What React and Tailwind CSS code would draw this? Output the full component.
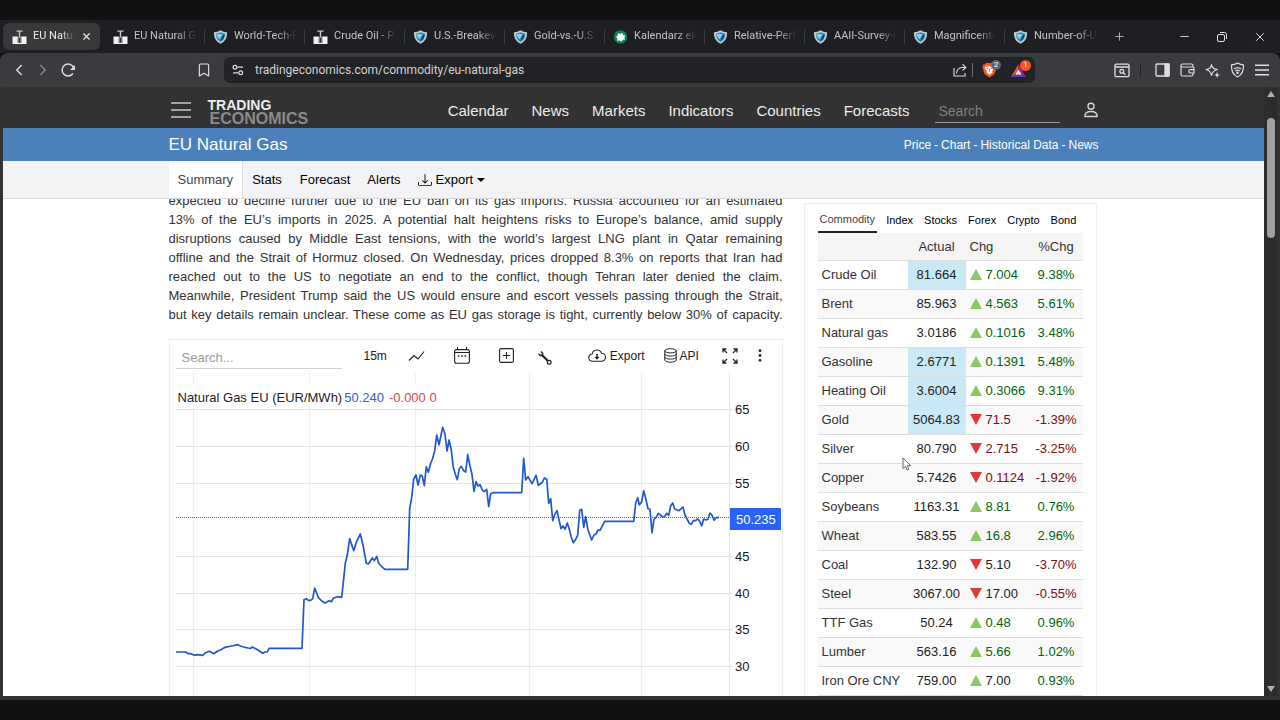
import React from 'react';
import { Bookmark, ChevronLeft, ChevronRight, Minus, Plus, X } from 'lucide-react';

// Titles are already shortened to what fits a tab; the end fades out.
const TABS = [
  { title: 'EU Natur', icon: 'te' },
  { title: 'EU Natural G', icon: 'te' },
  { title: 'World-Tech-E', icon: 'shield' },
  { title: 'Crude Oil - P', icon: 'te' },
  { title: 'U.S.-Breakev', icon: 'shield' },
  { title: 'Gold-vs.-U.S.', icon: 'shield' },
  { title: 'Kalendarz ek', icon: 'leaf' },
  { title: 'Relative-Perf', icon: 'shield' },
  { title: 'AAII-Survey-I', icon: 'shield' },
  { title: 'Magnificent-', icon: 'shield' },
  { title: 'Number-of-U', icon: 'shield' },
];

const NAV = ['Calendar', 'News', 'Markets', 'Indicators', 'Countries', 'Forecasts'];

const ARTICLE = [
  'expected to decline further due to the EU ban on its gas imports. Russia accounted for an estimated',
  '13% of the EU’s imports in 2025. A potential halt heightens risks to Europe’s balance, amid supply',
  'disruptions caused by Middle East tensions, with the world’s largest LNG plant in Qatar remaining',
  'offline and the Strait of Hormuz closed. On Wednesday, prices dropped 8.3% on reports that Iran had',
  'reached out to the US to negotiate an end to the conflict, though Tehran later denied the claim.',
  'Meanwhile, President Trump said the US would ensure and escort vessels passing through the Strait,',
  'but key details remain unclear. These come as EU gas storage is tight, currently below 30% of capacity.',
];

// hot: price cell was just updated; flat: change drawn in plain text colour
const QUOTES = [
  { name: 'Crude Oil', actual: '81.664', chg: '7.004', pct: '9.38%', up: true, hot: true },
  { name: 'Brent', actual: '85.963', chg: '4.563', pct: '5.61%', up: true },
  { name: 'Natural gas', actual: '3.0186', chg: '0.1016', pct: '3.48%', up: true },
  { name: 'Gasoline', actual: '2.6771', chg: '0.1391', pct: '5.48%', up: true, hot: true },
  { name: 'Heating Oil', actual: '3.6004', chg: '0.3066', pct: '9.31%', up: true, hot: true },
  { name: 'Gold', actual: '5064.83', chg: '71.5', pct: '-1.39%', up: false, hot: true },
  { name: 'Silver', actual: '80.790', chg: '2.715', pct: '-3.25%', up: false },
  { name: 'Copper', actual: '5.7426', chg: '0.1124', pct: '-1.92%', up: false },
  { name: 'Soybeans', actual: '1163.31', chg: '8.81', pct: '0.76%', up: true },
  { name: 'Wheat', actual: '583.55', chg: '16.8', pct: '2.96%', up: true },
  { name: 'Coal', actual: '132.90', chg: '5.10', pct: '-3.70%', up: false, flat: true },
  { name: 'Steel', actual: '3067.00', chg: '17.00', pct: '-0.55%', up: false, flat: true },
  { name: 'TTF Gas', actual: '50.24', chg: '0.48', pct: '0.96%', up: true },
  { name: 'Lumber', actual: '563.16', chg: '5.66', pct: '1.02%', up: true },
  { name: 'Iron Ore CNY', actual: '759.00', chg: '7.00', pct: '0.93%', up: true, flat: true },
];

const PRICE_LINE =
  '176,652 185.7,652 188.3,653.7 191,653.7 194.3,655.3 197,654.7 203,655.3 205,653 209.3,651.3 213.7,653.7 217.7,651 221,649.7 225,647.3 231.7,646 237.7,644.7 241,646.3 245,647.3 248.3,648 250.7,648.3 252.3,647 256.7,649.3 262.7,653.3 265,652 267.3,652 269,648.3 302,648.3 ' +
  '304,599.7 306.3,598.7 308.3,600.3 310.7,600.3 312.7,598.7 314.7,588 318.3,597.3 321.7,601 325,603 329.3,600.7 331.3,601.7 333.3,598.3 337.3,596.7 341.7,597.3 345.3,563.3 347.3,555 349.7,538.7 353.7,550.7 356.7,541.3 360.3,534 363,545 366.3,563.3 368.3,564 372.3,558 374.3,560.7 376.7,556.3 378.7,563.3 381.7,566.7 385,569.3 407.7,569.3 ' +
  '409.7,508.3 411.7,497.3 413.7,479 416,475 418,485 420.3,475 422.3,476 424.3,485.7 426.3,466.7 428.3,472.3 430.7,463.3 432.7,458.3 434.7,450.7 436.7,435 439,444.7 442.7,427.3 445,434 447,451 449,440 451.3,450 453.3,467.3 455.3,474.3 457.3,479.7 459.3,468.7 461.3,466.3 463.7,470.7 465.7,472 467.7,454.7 470,466 472,474.3 474,491.3 476,481.7 478,486 480,484.7 482.3,490 484.3,491.7 486.7,489.3 488.7,506.7 490.7,493.7 493,492.7 521.7,492.7 ' +
  '523.7,458.3 525.7,480 528,476.7 532,483.7 536,475.3 538.3,485.3 542.3,482.3 544.3,478 546.7,479 548.7,503.3 550.7,498.7 552.7,520.7 554.7,514.7 557,510.7 561,528.7 563,526 565,529.3 567.3,523 569.3,529.3 571.3,537.3 573.3,542.7 575.7,539.3 577.7,535 579.7,510.3 581.7,509.3 583.7,527.3 585.7,516.7 588,530 591.7,540 594,535 596,534 598,530 600,530.3 604.7,521.3 633.7,521.3 ' +
  '635.7,503.3 637.7,497.7 639.3,505 641.7,501.7 643.7,490.7 645.7,498.3 648,508.7 650,509.3 652,532.7 654,519.3 656,517.7 658.3,513.3 662.3,516.7 664.3,517 666.7,513.3 668.7,515.3 670.7,505.7 672.7,503 674.7,509 679,510.7 683,507 685,515 689.3,523.3 691.3,524.3 693.3,520.7 695.5,520.7 697.7,519 699.7,521.3 701.7,525.7 703.7,519 706,520 708,519.3 710,513 712,515.3 714,520.3 716.7,517.3 719,517.7';

const Y_TICKS = [
  { label: '65', y: 409.5 },
  { label: '60', y: 446.5 },
  { label: '55', y: 483.5 },
  { label: '45', y: 556.5 },
  { label: '40', y: 593.5 },
  { label: '35', y: 629.5 },
  { label: '30', y: 666.5 },
];

const X_LINES = [193.5, 309.5, 415.5, 529.5, 641.5];

export default function App() {
  return (
    <div className="flex h-screen flex-col overflow-hidden bg-[#111111] pt-5 pb-5 font-['Liberation_Sans',Arial,sans-serif]">
      <TabStrip />
      <Toolbar />
      <div className="flex min-h-0 flex-1 border-x-[3px] border-b-4 border-[#333333] bg-[#2c2c2c]">
        <div className="flex min-w-0 flex-1 flex-col overflow-hidden bg-white">
          <SiteHeader />
          <main className="mx-auto flex w-full max-w-[930px] justify-between overflow-hidden">
            <div className="w-[614px] shrink-0">
              <Article />
              <ChartCard />
            </div>
            <QuotesCard />
          </main>
        </div>
        <Scrollbar />
      </div>
      <Cursor />
    </div>
  );
}

/* ---------- browser chrome ---------- */

function TabStrip() {
  return (
    <div className="flex h-[33px] shrink-0 items-center bg-[#1e1f22] pl-[3px] font-[Roboto,'Open_Sans',sans-serif]">
      {TABS.map((tab, i) => (
        <Tab key={i} {...tab} active={i === 0} divider={i > 1} />
      ))}
      <button className="ml-[9px] text-[#c8c8c8]" aria-label="New tab">
        <Plus size={13} strokeWidth={1.5} />
      </button>
      <div className="ml-auto flex items-center gap-[25px] pr-[13px] text-[#e4e4e4]">
        <button aria-label="Minimize"><Minus size={13} strokeWidth={1.6} /></button>
        <button aria-label="Restore">
          <svg width="12" height="12" viewBox="0 0 12 12" fill="none" stroke="currentColor">
            <rect x="1.5" y="3.5" width="7" height="7" rx="1.5" />
            <path d="M4 1.5h4.5a2 2 0 0 1 2 2V8" />
          </svg>
        </button>
        <button aria-label="Close window"><X size={14} strokeWidth={1.6} /></button>
      </div>
    </div>
  );
}

function Tab({ title, icon, active, divider }) {
  if (active) {
    return (
      <div className="mr-1 flex h-[27px] w-[97px] shrink-0 items-center rounded-md bg-[#38383a] pl-[9px]">
        <Favicon kind={icon} />
        <TabTitle className="w-[44px] text-[#e8e8e8]">{title}</TabTitle>
        <button className="ml-1 text-[#e8e8e8]" aria-label="Close tab"><X size={11} strokeWidth={2.5} /></button>
      </div>
    );
  }
  return (
    <div className={`flex h-[27px] w-[100px] shrink-0 items-center ${divider ? 'border-l border-[#3b3c3f] pl-2 [border-image:linear-gradient(transparent_25%,#3b3c3f_25%,#3b3c3f_75%,transparent_75%)_1]' : 'pl-[9px]'}`}>
      <Favicon kind={icon} />
      <TabTitle className="w-[66px] text-[#c3c3c4]">{title}</TabTitle>
    </div>
  );
}

function TabTitle({ className, children }) {
  return (
    <span className={`ml-[6px] shrink-0 overflow-hidden text-[11px] whitespace-nowrap [mask-image:linear-gradient(to_right,black_65%,transparent_95%)] ${className}`}>
      {children}
    </span>
  );
}

function Favicon({ kind }) {
  if (kind === 'te') {
    return (
      <svg className="shrink-0" width="15" height="14" viewBox="0 0 15 14">
        <path d="M4.500 .5h6v1.300H8.200V7H6.800V1.800H4.500z" fill="#c9c9c9" />
        <path d="M.5 6.500h5l1 1h2l1-1h5V14H.5z" fill="#f2f2f2" />
        <rect x="5.500" y="7.500" width="4" height="5.500" fill="#77797b" />
        <rect x="7" y="8" width="1" height="4.500" fill="#2e2e2e" />
      </svg>
    );
  }
  if (kind === 'leaf') {
    return (
      <svg className="shrink-0" width="15" height="14" viewBox="0 0 15 14">
        <circle cx="7.500" cy="7" r="6.700" fill="#0e8457" />
        <path d="M5 3.200l2.300 .8 2-1.200 .8 2.200 2.200 .4-1 2 .8 2.200-2.400 .2-1 1.800-2-1.200-2.500 .4 .2-2.300L3 7l1.600-1.500z" fill="#fff" strokeLinejoin="round" />
      </svg>
    );
  }
  return (
    <svg className="shrink-0" width="15" height="14" viewBox="0 0 15 14">
      <path d="M1 2.300Q4.500 2.200 7.500 .3q3 1.900 6.500 2 .7 8.200-6.500 11.500Q.3 10.500 1 2.300z" fill="#c3c9ce" />
      <path d="M3 3.600Q5.500 3.300 7.500 2.200 9.500 3.300 12 3.600q.2 6-4.500 8.300Q2.800 9.600 3 3.600z" fill="#2387b9" />
      <path d="M3.200 4.600q3-1.300 6.500-.2L6.300 9.300Q4.500 7 3.200 4.600z" fill="#8fd3ef" />
      <path d="M9.200 5.200l2.500-.7Q11.500 9 7.700 11z" fill="#124f7c" />
    </svg>
  );
}

function Toolbar() {
  return (
    <div className="flex h-[34px] shrink-0 items-center rounded-t-lg bg-[#3a3b3f] pr-[11px] pl-[10px] font-[Roboto,'Open_Sans',sans-serif] text-[#dededf]">
      <button aria-label="Back"><ChevronLeft size={18} strokeWidth={2} /></button>
      <button className="ml-[6px] text-[#85868a]" aria-label="Forward"><ChevronRight size={18} strokeWidth={2} /></button>
      <button className="ml-2" aria-label="Reload">
        <svg width="16" height="16" viewBox="0 0 16 16" fill="none" stroke="currentColor" strokeWidth="1.500">
          <path d="M13 11.500A6 6 0 1 1 13.800 6" />
          <path d="M15 3v5h-5z" fill="currentColor" stroke="none" />
        </svg>
      </button>
      <button className="mr-3 ml-[120px]" aria-label="Bookmark"><Bookmark size={16} strokeWidth={1.8} /></button>

      <div className="flex h-[26px] w-[811px] shrink items-center rounded-md bg-[#222326] px-2">
        <svg width="12" height="12" viewBox="0 0 12 12" fill="none" stroke="currentColor" strokeWidth="1.200">
          <circle cx="3" cy="3.200" r="1.900" />
          <path d="M5.500 3.200H11M1 8.800h5" />
          <circle cx="8.700" cy="8.800" r="1.900" />
        </svg>
        <input
          aria-label="Address"
          className="ml-[11px] min-w-0 flex-1 bg-transparent text-[12px] text-[#d2d2d3] outline-none"
          defaultValue="tradingeconomics.com/commodity/eu-natural-gas"
        />
        <button aria-label="Share">
          <svg width="14" height="14" viewBox="0 0 14 14" fill="none" stroke="currentColor" strokeWidth="1.100">
            <path d="M1 5v8h11v-3" />
            <path d="M3.500 10.500Q4 5 9 4.500h3.500M9.500 1.200l3.300 3.300-3.300 3.200" />
          </svg>
        </button>
        <span className="mx-[5px] h-[14px] w-px bg-[#6b6c70]" />
        <button className="relative ml-1" aria-label="Shields">
          <svg width="15" height="16" viewBox="0 0 15 16">
            <path d="M4 1h7l1.500 1.500h1.500l.5 3-2 6.500L7.500 15.500 2.500 12 .5 5.500l.5-3h1.500z" fill="#f1592b" />
            <path d="M3.300 4.500l2.700.3 1.500-.7 1.500.7 2.700-.3.700 1.500-2.200 2.700.300 1.800L7.500 12.700 4.500 10.500l.3-1.800L2.600 6z" fill="#fff" />
            <path d="M4.500 6l2 .7M10.500 6l-2 .7M7.500 7v2.500" stroke="#f1592b" />
          </svg>
          <span className="absolute -top-[2px] left-[9px] flex h-[10px] w-[10px] items-center justify-center rounded-full bg-[#5d6571] text-[8px] leading-none text-white">2</span>
        </button>
        <button className="relative ml-[13px]" aria-label="Rewards">
          <svg width="17" height="15" viewBox="0 0 17 15">
            <path d="M8.500 1L1 14l7.500-5z" fill="#f0502c" />
            <path d="M8.500 1L16 14l-7.500-5z" fill="#a3247d" />
            <path d="M1 14h15L8.500 9z" fill="#5a3db5" />
            <path d="M8.500 6.500L5.500 11.500h6z" fill="#fff" />
          </svg>
          <span className="absolute -top-[3px] left-[10px] flex h-[11px] w-[11px] items-center justify-center rounded-full bg-[#f4512c] text-[8px] leading-none text-white">1</span>
        </button>
      </div>

      <div className="ml-auto flex items-center gap-[10px]">
        <button aria-label="Find in page">
          <svg width="16" height="15" viewBox="0 0 16 15" fill="none" stroke="currentColor" strokeWidth="1.300">
            <rect x="1" y="1.200" width="14" height="12.500" rx="1.200" />
            <path d="M1 4h14M9.300 9.800l2 2" />
            <circle cx="7.800" cy="8.300" r="1.900" />
          </svg>
        </button>
        <span className="mr-1 h-3 w-px bg-[#202124]" />
        <button aria-label="Sidebar">
          <svg width="15" height="14" viewBox="0 0 15 14" fill="none" stroke="currentColor" strokeWidth="1.300">
            <rect x="1" y="1" width="13" height="12" rx="1" />
            <rect x="10" y="1" width="4" height="12" fill="currentColor" />
          </svg>
        </button>
        <button aria-label="Wallet">
          <svg width="15" height="14" viewBox="0 0 15 14" fill="none" stroke="currentColor" strokeWidth="1.200">
            <path d="M13 4V2.500a1.500 1.500 0 0 0-1.500-1.500H2.500A1.500 1.500 0 0 0 1 2.500v9A1.500 1.500 0 0 0 2.500 13h9a1.500 1.500 0 0 0 1.500-1.500V10M1 4h11.500a1.500 1.500 0 0 1 1.500 1.500V10H10.500a1.700 1.700 0 0 1 0-3.400H14" />
          </svg>
        </button>
        <button aria-label="Assistant">
          <svg width="15" height="15" viewBox="0 0 15 15" fill="none" stroke="currentColor" strokeWidth="1.200">
            <path d="M6.500 1.500Q7 6 12.500 6.500 7.500 7.500 6.500 12.500 5.500 7.500 1 6.500 6 6 6.500 1.500z" strokeLinejoin="round" />
            <path d="M12 9l.8 2.200 2.200.8-2.200.8L12 15l-.8-2.200L9 12l2.200-.8z" fill="currentColor" stroke="none" />
          </svg>
        </button>
        <button aria-label="VPN">
          <svg width="15" height="16" viewBox="0 0 15 16" fill="none" stroke="currentColor" strokeWidth="1.200">
            <path d="M7.500 1Q10.500 2.800 13.500 2.800q.5 9-6 12.200Q1 11.800 1.500 2.800 4.500 2.800 7.500 1z" />
            <path d="M4 7q3.500-2.800 7 0M5.400 9q2.100-1.600 4.200 0" />
            <circle cx="7.500" cy="10.700" r=".7" fill="currentColor" />
          </svg>
        </button>
        <button aria-label="Menu">
          <svg width="14" height="12" viewBox="0 0 14 12" stroke="currentColor" strokeWidth="1.400">
            <path d="M0 1.200h14M0 6h14M0 10.800h14" />
          </svg>
        </button>
      </div>
    </div>
  );
}

function Scrollbar() {
  return (
    <div className="flex w-[13px] shrink-0 flex-col items-center justify-between py-1" aria-hidden="true">
      <div className="flex flex-col items-center gap-[21px]">
        <svg width="8" height="6" viewBox="0 0 8 6"><path d="M4 0l4 6H0z" fill="#b0b0b0" /></svg>
        <div className="h-[120px] w-2 rounded-full bg-[#a0a0a0]" />
      </div>
      <svg width="8" height="6" viewBox="0 0 8 6"><path d="M4 6l4-6H0z" fill="#b0b0b0" /></svg>
    </div>
  );
}

/* ---------- site header ---------- */

function SiteHeader() {
  return (
    <header className="shrink-0">
      <div className="bg-[#323232]">
        <div className="mx-auto flex h-[41px] max-w-[930px] items-center pt-2">
          <button className="ml-[2px] pb-[3px] text-[#c9c9c9]" aria-label="Open menu">
            <svg width="20" height="16" viewBox="0 0 20 16" stroke="currentColor" strokeWidth="1.300">
              <path d="M0 1h20M0 8h20M0 15h20" />
            </svg>
          </button>
          <a href="#" className="ml-[17px] flex flex-col leading-[13px] font-bold">
            <span className="text-[14px] text-[#ececec]">TRADING</span>
            <span className="pl-[2px] text-[16px] text-[#8b8b8b]">ECONOMICS</span>
          </a>
          <nav className="ml-auto flex gap-[23px] text-[15px] text-[#ececec]">
            {NAV.map((n) => <a key={n} href="#">{n}</a>)}
          </nav>
          <input
            aria-label="Search"
            placeholder="Search"
            className="ml-[25px] h-[23px] w-[125px] border-b border-[#9a9a9a] bg-transparent px-1 text-[14px] outline-none placeholder:text-[#808080]"
          />
          <a href="#" className="mr-[1px] ml-6 pb-1 text-[#d6d6d6]" aria-label="Account">
            <svg width="14" height="16" viewBox="0 0 14 16" fill="none" stroke="currentColor" strokeWidth="1.400">
              <circle cx="7" cy="4.200" r="3" />
              <path d="M.8 14.500q0-5 6.200-5t6.200 5z" strokeLinejoin="round" />
            </svg>
          </a>
        </div>
      </div>

      <div className="bg-[#4c80bb] text-white">
        <div className="mx-auto flex h-[33px] max-w-[930px] items-center justify-between">
          <h1 className="text-[17px]">EU Natural Gas</h1>
          <div className="flex gap-[3px] text-[12px]">
            <a href="#">Price</a>-<a href="#">Chart</a>-<a href="#">Historical Data</a>-<a href="#">News</a>
          </div>
        </div>
      </div>

      <div className="border-b border-[#d9d9d9] bg-[#f3f3f5]">
        <nav className="mx-auto flex h-[37px] max-w-[930px] items-stretch text-[13px] text-black">
          <a href="#" className="flex items-center border-r border-[#dedede] bg-white px-[9px] text-[#444444]">Summary</a>
          <a href="#" className="flex items-center pl-[9px]">Stats</a>
          <a href="#" className="flex items-center pl-[18px]">Forecast</a>
          <a href="#" className="flex items-center pl-[17px]">Alerts</a>
          <button className="flex items-center gap-1 pl-[17px]">
            <svg width="14" height="14" viewBox="0 0 16 16" fill="currentColor">
              <path d="M.5 9.900a.5.5 0 0 1 .5.500v2.500a1 1 0 0 0 1 1h12a1 1 0 0 0 1-1v-2.500a.5.5 0 0 1 1 0v2.500a2 2 0 0 1-2 2H2a2 2 0 0 1-2-2v-2.500a.5.5 0 0 1 .5-.500" />
              <path d="M7.600 11.850a.5.5 0 0 0 .8 0l3-3a.5.5 0 0 0-.7-.7L8.500 10.300V1.500a.5.5 0 0 0-1 0v8.800L5.300 8.150a.5.5 0 0 0-.7.7z" />
            </svg>
            Export
            <svg width="8" height="4" viewBox="0 0 8 4"><path d="M0 0h8L4 4z" fill="currentColor" /></svg>
          </button>
        </nav>
      </div>
    </header>
  );
}

/* ---------- main column ---------- */

// The page is scrolled, so the first line sits partly under the sticky header.
function Article() {
  return (
    <div className="overflow-hidden">
      <p className="-mt-2 text-[13px] leading-[19px] text-[#333333]">
        {ARTICLE.map((line) => (
          <span key={line} className="block whitespace-nowrap [text-align-last:justify]">{line} </span>
        ))}
      </p>
    </div>
  );
}

function ChartCard() {
  return (
    <section className="mt-[15px] border border-[#ececec] bg-white text-[#222222]">
      <div className="mb-[2px] flex h-[31px] items-center pl-[6px] text-[13px]">
        <input
          aria-label="Search symbol"
          placeholder="Search..."
          className="mt-1 h-[22px] w-[166px] border-b border-[#d2d2d2] px-[6px] outline-none placeholder:text-[#9b9b9b]"
        />
        <button className="ml-[22px] text-[12px]">15m</button>
        <button className="ml-[21px]" aria-label="Chart type">
          <svg width="17" height="12" viewBox="0 0 17 12" fill="none" stroke="currentColor" strokeWidth="1.200">
            <path d="M1 10.500l5-5 4 3.500 6-7.500" />
          </svg>
        </button>
        <button className="ml-[29px]" aria-label="Date range">
          <svg width="16" height="17" viewBox="0 0 16 17" fill="none" stroke="currentColor" strokeWidth="1.100">
            <rect x=".6" y="2.600" width="14.800" height="13.700" rx="2" />
            <path d="M3.500 0v3M12.500 0v3M1 5.500h14" />
            <path d="M3.800 9h1.600M7.200 9h1.600M10.600 9h1.600" strokeWidth="1.700" />
          </svg>
        </button>
        <button className="ml-[29px]" aria-label="Add indicator">
          <svg width="15" height="15" viewBox="0 0 15 15" fill="none" stroke="currentColor" strokeWidth="1.100">
            <rect x=".6" y=".6" width="13.800" height="13.800" rx="1.500" />
            <path d="M7.500 4v7M4 7.500h7" />
          </svg>
        </button>
        <button className="ml-6 pt-1" aria-label="Tools">
          <svg width="14" height="14" viewBox="0 0 14 14" fill="none" stroke="currentColor">
            <path d="M4 4l6 6" strokeWidth="2.200" />
            <path d="M2.800 .5L4.800 2.600 4 4 2.500 4.700 .5 2.800" strokeWidth="1.400" strokeLinejoin="round" />
            <circle cx="11.200" cy="11.200" r="1.900" fill="white" strokeWidth="1.200" />
          </svg>
        </button>
        <button className="ml-9 flex items-center gap-1 text-[12px]">
          <svg width="18" height="13" viewBox="0 0 18 13" fill="none" stroke="currentColor" strokeWidth="1.100">
            <path d="M4.500 12.300A3.600 3.600 0 0 1 4.200 5 4.800 4.800 0 0 1 13.500 4.300a3.800 3.800 0 0 1 0 8z" />
            <path d="M9 5v4.500" strokeWidth="1.600" />
            <path d="M6.500 8L9 10.800 11.500 8z" fill="currentColor" stroke="none" />
          </svg>
          Export
        </button>
        <button className="ml-[19px] flex items-center gap-[3px] text-[12px]">
          <svg width="13" height="15" viewBox="0 0 13 15" fill="none" stroke="currentColor">
            <ellipse cx="6.500" cy="2.800" rx="5.700" ry="2.100" />
            <path d="M.8 2.800v9.200c0 2.900 11.400 2.900 11.400 0V2.800M.8 6c0 2.800 11.400 2.800 11.400 0M.8 9c0 2.800 11.400 2.800 11.400 0" />
          </svg>
          API
        </button>
        <button className="ml-[23px]" aria-label="Full screen">
          <svg width="16" height="16" viewBox="0 0 16 16" fill="none" stroke="currentColor" strokeWidth="1.300">
            <path d="M1 4.500V1h3.500M1 1l4 4M11.500 1H15v3.500M15 1l-4 4M1 11.500V15h3.500M1 15l4-4M15 11.500V15h-3.500M15 15l-4-4" />
          </svg>
        </button>
        <button className="ml-5" aria-label="More">
          <svg width="4" height="13" viewBox="0 0 4 13" fill="currentColor">
            <circle cx="2" cy="1.700" r="1.400" /><circle cx="2" cy="6.500" r="1.400" /><circle cx="2" cy="11.300" r="1.400" />
          </svg>
        </button>
      </div>
      <PriceChart />
    </section>
  );
}

function PriceChart() {
  return (
    <svg className="block w-full text-[13px]" viewBox="170 373 612 350" role="img" aria-label="Natural Gas EU price chart">
      <g stroke="#eeeeee">
        {X_LINES.map((x) => <line key={x} x1={x} y1="373" x2={x} y2="723" />)}
      </g>
      <g stroke="#e4e4e4">
        {Y_TICKS.map((t) => <line key={t.label} x1="176" y1={t.y} x2="733" y2={t.y} />)}
        <line x1="729.500" y1="373" x2="729.500" y2="723" />
      </g>
      <rect x="176" y="384" width="263" height="23" fill="white" />
      <text x="177.500" y="402" fill="#1f1f1f">
        Natural Gas EU (EUR/MWh)
        <tspan dx="2" fill="#2f5fd6">50.240</tspan>
        <tspan dx="5" fill="#d8474b">-0.000 0</tspan>
      </text>
      <line x1="176" y1="517.500" x2="730" y2="517.500" stroke="#5b6c95" strokeDasharray="1 1" />
      <polyline points={PRICE_LINE} fill="none" stroke="#2257cf" strokeWidth="1.700" strokeLinejoin="round" />
      {Y_TICKS.map((t) => (
        <text key={t.label} x="735" y={t.y + 4} fill="#161616">{t.label}</text>
      ))}
      <rect x="730" y="508" width="51" height="22" fill="#2962f6" />
      <text x="736" y="523.500" fill="white">50.235</text>
    </svg>
  );
}

/* ---------- quotes ---------- */

function QuotesCard() {
  return (
    <aside className="mt-1 mr-[2px] w-[293px] shrink-0 self-start border border-[#ececec] bg-white px-[13px]">
      <nav className="flex h-[29px] items-stretch gap-[11px] text-[11px] text-black">
        <a href="#" className="-mr-[2px] flex items-center border-b-2 border-[#222222] px-[2px] pt-1 text-[#444444]">Commodity</a>
        <a href="#" className="flex items-center pt-1">Index</a>
        <a href="#" className="flex items-center pt-1">Stocks</a>
        <a href="#" className="flex items-center pt-1">Forex</a>
        <a href="#" className="flex items-center pt-1">Crypto</a>
        <a href="#" className="flex items-center pt-1">Bond</a>
      </nav>
      <table className="w-[265px] table-fixed border-collapse text-[13px] text-[#333333]">
        <colgroup>
          <col className="w-[90px]" />
          <col className="w-[58px]" />
          <col className="w-[64px]" />
          <col className="w-[53px]" />
        </colgroup>
        <thead>
          <tr className="h-[27px] border-b border-[#dddddd] bg-[#f5f5f5]">
            <th aria-label="Name" />
            <th className="p-0 font-normal">Actual</th>
            <th className="p-0 pl-1 text-left font-normal">Chg</th>
            <th className="p-0 font-normal">%Chg</th>
          </tr>
        </thead>
        <tbody>
          {QUOTES.map((q) => <QuoteRow key={q.name} {...q} />)}
        </tbody>
      </table>
    </aside>
  );
}

function QuoteRow({ name, actual, chg, pct, up, hot, flat }) {
  const tone = up ? 'text-[#00660a]' : 'text-[#7d0d12]';
  return (
    <tr className="h-[29px] border-b border-[#dddddd] even:bg-[#f9f9f9]">
      <td className="p-0 pl-1 whitespace-nowrap">{name}</td>
      <td className={`p-0 text-center text-[#222222] ${hot ? 'bg-[#c9e9f6]' : ''}`}>{actual}</td>
      <td className={`p-0 pl-1 whitespace-nowrap ${flat ? 'text-[#222222]' : tone}`}>
        <span className="flex items-center gap-1">
          <svg width="12" height="11" viewBox="0 0 12 11" aria-hidden="true">
            {up ? <path d="M6 0l6 11H0z" fill="#8bc862" /> : <path d="M0 0h12L6 11z" fill="#e0393c" />}
          </svg>
          {chg}
        </span>
      </td>
      <td className={`p-0 text-center ${tone}`}>{pct}</td>
    </tr>
  );
}

// Mouse pointer resting over the page
function Cursor() {
  return (
    <svg className="pointer-events-none absolute top-[457px] left-[902px]" width="10" height="14" viewBox="0 0 10 14" aria-hidden="true">
      <path d="M1 1v10.500l2.500-2.200 1.600 3.700 1.800-.8-1.600-3.600h3.300z" fill="white" stroke="#555555" strokeWidth=".9" />
    </svg>
  );
}
